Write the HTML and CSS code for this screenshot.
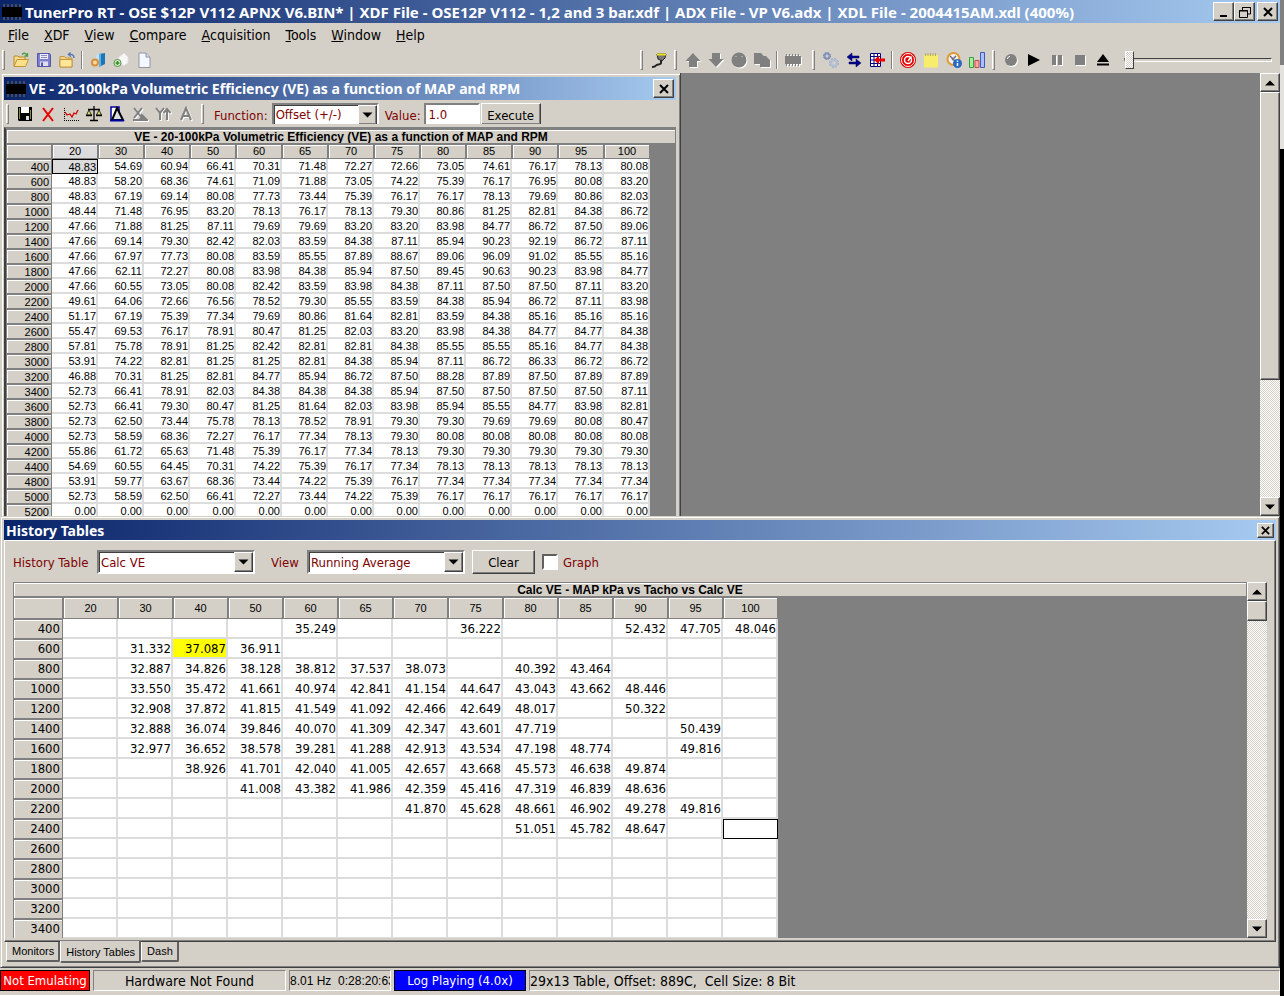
FILE: index.html
```html
<!DOCTYPE html>
<html lang="en">
<head>
  <meta charset="UTF-8">
  <title>TunerPro RT</title>
  <link rel="stylesheet" href="styles.css">
</head>
<body>
  <svg class="sprite" aria-hidden="true">
    <symbol id="chip" viewBox="0 0 20 16">
      <path d="M2 0v16M6 0v16M10 0v16M14 0v16M18 0v16" stroke="#55585f" stroke-width="1.5"/>
      <rect y="3" width="20" height="10" fill="#000"/>
    </symbol>
    <symbol id="x" viewBox="0 0 10 10">
      <path d="M1 1l8 8M9 1l-8 8" stroke="#000" stroke-width="2"/>
    </symbol>
    <symbol id="up" viewBox="0 0 10 6"><path d="M0 5.500L5 .5l5 5z"/></symbol>
    <symbol id="down" viewBox="0 0 10 6"><path d="M0 .5h10l-5 5z"/></symbol>
  </svg>

  <div class="app">
    <header class="titlebar">
      <svg class="chip"><use href="#chip"/></svg>
      <h1>TunerPro RT - OSE $12P V112 APNX V6.BIN* | XDF File - OSE12P V112 - 1,2 and 3 bar.xdf | ADX File - VP V6.adx | XDL File - 2004415AM.xdl (400%)</h1>
      <div class="win-buttons">
        <button class="cap" aria-label="Minimize"><svg viewBox="0 0 12 12"><path d="M2 10h7" stroke="#000" stroke-width="2"/></svg></button>
        <button class="cap" aria-label="Restore"><svg viewBox="0 0 12 12"><path d="M3.500 4V1.500h8V8H9M3 1.500h9M.5 4.500h8v7h-8zM0 5h9" fill="none" stroke="#000"/></svg></button>
        <button class="cap close" aria-label="Close"><svg><use href="#x"/></svg></button>
      </div>
    </header>

    <nav class="menu">
      <a href="#"><u>F</u>ile</a>
      <a href="#"><u>X</u>DF</a>
      <a href="#"><u>V</u>iew</a>
      <a href="#"><u>C</u>ompare</a>
      <a href="#"><u>A</u>cquisition</a>
      <a href="#"><u>T</u>ools</a>
      <a href="#"><u>W</u>indow</a>
      <a href="#"><u>H</u>elp</a>
    </nav>

    <div class="toolbar">
      <div class="group first">
        <button class="tool" aria-label="Open"><svg viewBox="0 0 16 16"><path d="M1 14V4h4l1 1h6v3" fill="#f3dc8c" stroke="#b98a2a"/><path d="M1 14.500l3-7h11.500l-3 7z" fill="#fbe08a" stroke="#c69532"/><path d="M9 2.500c2-2 4-1.500 5 1M14.500 1v3h-3" fill="none" stroke="#4d9a45" stroke-width="1.300"/></svg></button>
        <button class="tool" aria-label="Save"><svg viewBox="0 0 16 16"><path d="M1.500 1.500h12l1 1v12h-13z" fill="#8080d0" stroke="#5555a8"/><path d="M4 2h8v5H4z" fill="#eef"/><path d="M5 3.500h6M5 5.500h6" stroke="#8a8ac8"/><path d="M4 9.500h8V14H4z" fill="#dde"/><path d="M5 10.500h2V14H5z" fill="#55a"/></svg></button>
        <button class="tool" aria-label="Close file"><svg viewBox="0 0 16 16"><path d="M1 6V4.500h4.500L7 6h6v9H1z" fill="#f5d67c" stroke="#c29543"/><path d="M1 7.500h12V15H1z" fill="#ffe698" stroke="#c29543"/><path d="M15 6c0-3-2-4-5-3.500M11.500.5l-2 2 2.300 2" fill="none" stroke="#5a72b5" stroke-width="1.400"/></svg></button>
        <span class="sep"></span>
        <button class="tool" aria-label="Select XDF"><svg viewBox="0 0 16 16"><path d="M6 3l3-1v12H6z" fill="#bfe0f5"/><path d="M9 2l6-1v11l-6 3z" fill="#1976b8"/><path d="M9 2l2-.5V14l-2 1z" fill="#63b2e2"/><circle cx="5" cy="10.500" r="3" fill="#f5d9a5" stroke="#d8913a" stroke-width="2"/></svg></button>
        <button class="tool" aria-label="New item"><svg viewBox="0 0 16 16"><path d="M5 6l6-5 4 4v6l-5 3z" fill="#f7f7f7" stroke="#dedede"/><circle cx="4.500" cy="11" r="3.500" fill="#e4f3dc" stroke="#4e9638"/><path d="M2.500 11h4M4.500 9v4" stroke="#2f8a20" stroke-width="1.500"/></svg></button>
        <button class="tool" aria-label="New file"><svg viewBox="0 0 16 16"><path d="M3 1h7l4 4v10.500H3z" fill="#f5f9ff" stroke="#8d96a8"/><path d="M10 1v4h4" fill="#d3dcec" stroke="#8d96a8"/></svg></button>
      </div>
      <div class="group">
        <button class="tool" aria-label="Connect"><svg viewBox="0 0 16 16"><path d="M6 2h9l-1 4-3 3-4-2z" fill="#777" stroke="#222"/><path d="M6 2.500h9" stroke="#e8e020" stroke-width="2"/><path d="M10 8v3c0 2-4 1-5 2.500S2 15 1 15" fill="none" stroke="#222" stroke-width="2"/></svg></button>
      </div>
      <div class="group wide">
        <button class="tool off" aria-label="Upload" disabled><svg viewBox="0 0 16 16"><path d="M8 1l7.500 8H12v6H4V9H.5z"/></svg></button>
        <button class="tool off" aria-label="Download" disabled><svg viewBox="0 0 16 16"><path d="M8 15l7.500-8H12V1H4v6H.5z"/></svg></button>
        <button class="tool off" aria-label="Verify" disabled><svg viewBox="0 0 16 16"><circle cx="8" cy="8" r="7.500"/><path d="M5 4v1M11 4v1" stroke="#d4d0c8"/></svg></button>
        <button class="tool off" aria-label="Copy" disabled><svg viewBox="0 0 16 16"><path d="M0 1h7l3 3h2l4 4v7H6v-3H0z"/></svg></button>
        <span class="sep"></span>
        <button class="tool off" aria-label="Chip" disabled><svg viewBox="0 0 16 16"><path d="M0 4h16v8H0z"/><path d="M1.500 2v12M4.500 2v12M7.500 2v12M10.500 2v12M13.500 2v12" stroke="#808080"/></svg></button>
      </div>
      <div class="group">
        <button class="tool" aria-label="Settings"><svg viewBox="0 0 16 16"><circle cx="4" cy="4" r="2.500" fill="none" stroke="#8795bd" stroke-width="2"/><circle cx="4" cy="4" r="3.500" fill="none" stroke="#7182b2" stroke-dasharray="1.500 1.250"/><circle cx="11" cy="11" r="3" fill="none" stroke="#b4bfd6" stroke-width="2.500"/><circle cx="11" cy="11" r="4.500" fill="none" stroke="#98a6c5" stroke-dasharray="2 1.500"/></svg></button>
        <button class="tool" aria-label="Exchange"><svg viewBox="0 0 16 16"><path d="M1 5l5-4v3h7v2H6v3zM15 11l-5-4v3H3v2h7v3z" fill="#000090" stroke="#000050" stroke-width=".5"/></svg></button>
        <button class="tool" aria-label="Import"><svg viewBox="0 0 16 16"><path d="M1.500 1.500h10v13h-10zM1.500 4.500h10M1.500 8h10M1.500 11.500h10M5 1.500v13M8.500 1.500v13" fill="#fff" stroke="#000080"/><path d="M5 8l5-4.500v3h6v3h-6v3z" fill="#f00000"/></svg></button>
        <span class="sep"></span>
        <button class="tool" aria-label="Gauge"><svg viewBox="0 0 16 16"><circle cx="8" cy="8" r="8" fill="#e00000"/><circle cx="8" cy="8" r="6.500" fill="none" stroke="#fff"/><circle cx="8" cy="8" r="3.500" fill="#e00000" stroke="#fff" stroke-width="1.500"/><path d="M8 9l3.500-4.500" stroke="#fff" stroke-width="1.500"/></svg></button>
        <button class="tool" aria-label="Notes"><svg viewBox="0 0 16 16"><path d="M1 3h14v12.500H1z" fill="#f8ec6c"/><path d="M2.500 1v3M5 1v3M7.500 1v3M10 1v3M12.500 1v3" stroke="#b0a85a"/></svg></button>
        <button class="tool" aria-label="Dashboard"><svg viewBox="0 0 16 16"><circle cx="7.500" cy="7" r="6" fill="#f4f1e8" stroke="#e09a35" stroke-width="2"/><path d="M4 4l5 5M10 4L6 8" stroke="#677186" stroke-width="1.500"/><circle cx="11.500" cy="11.500" r="4.500" fill="#2868c0"/><path d="M11.500 8.500v1.500M11.500 11v3" stroke="#fff" stroke-width="1.500"/></svg></button>
        <button class="tool" aria-label="Monitors"><svg viewBox="0 0 16 16"><path d="M.5 5.500h4v10h-4z" fill="#a5eda0" stroke="#38a038"/><path d="M6 8.500h4v7H6z" fill="#f7aaa5" stroke="#c94b48"/><path d="M11.500.5h4v15h-4z" fill="#a9c2ff" stroke="#3f5bc0"/></svg></button>
      </div>
      <div class="group">
        <button class="tool off" aria-label="Record" disabled><svg viewBox="0 0 16 16"><circle cx="8" cy="8" r="6"/><path d="M4.500 7c0-1.500 1-2.500 2.500-2.500" fill="none" stroke="#fff"/></svg></button>
        <button class="tool" aria-label="Play"><svg viewBox="0 0 16 16"><path d="M2 2l12 6-12 6z"/></svg></button>
        <button class="tool off" aria-label="Pause" disabled><svg viewBox="0 0 16 16"><path d="M3 3h4v10H3zM9 3h4v10H9z"/></svg></button>
        <button class="tool off" aria-label="Stop" disabled><svg viewBox="0 0 16 16"><path d="M3 3h10v10H3z"/></svg></button>
        <button class="tool" aria-label="Eject"><svg viewBox="0 0 16 16"><path d="M8 2l6 8H2zM2 11.500h12v2H2z"/></svg></button>
      </div>
      <input class="slider" type="range" min="0" max="100" value="0" aria-label="Log position">
    </div>

    <main class="workspace">
      <section class="child">
        <div class="titlebar">
          <svg class="chip"><use href="#chip"/></svg>
          <h2>VE - 20-100kPa Volumetric Efficiency (VE) as a function of MAP and RPM</h2>
          <button class="cap close" aria-label="Close table"><svg><use href="#x"/></svg></button>
        </div>
        <div class="child-bar">
          <div class="group">
            <button class="tool" aria-label="Save table"><svg viewBox="0 0 16 16"><path d="M1 1h14v14H2l-1-1z"/><path d="M4 1h8v6H4z" fill="#fff"/><path d="M2 2h1v11H2zM13 4h1v9h-1z" fill="#8a8a30"/><path d="M9 10h3v4H9z" fill="#ddd"/></svg></button>
            <button class="tool" aria-label="Discard"><svg viewBox="0 0 16 16"><path d="M3 2l10 13M13 2L3 15" stroke="#e80000" stroke-width="2"/></svg></button>
            <button class="tool" aria-label="Graph table"><svg viewBox="0 0 16 16"><path d="M1.500 2v13M1 14.500h15" fill="none" stroke="#000" stroke-dasharray="1 1"/><path d="M2 6l2 3 3-1 2 3 2-4 2 1 2-4" fill="none" stroke="#d00000" stroke-width="1.300"/></svg></button>
            <button class="tool" aria-label="Compare tables"><svg viewBox="0 0 16 16"><path d="M8 0v14M4 14.500h8M2 3.500h12" stroke="#000" stroke-width="1.300"/><path d="M3 4L.5 9h5zM13 4l-2.500 5h5z" fill="#e8e070" stroke="#000" stroke-width=".8"/><path d="M0 9.500h6M10 9.500h6" stroke="#000" stroke-width="1.500"/></svg></button>
            <button class="tool" aria-label="Difference"><svg viewBox="0 0 16 16"><path d="M2 1h8v13H2z" fill="#fff" stroke="#0000a0" stroke-width="1.500"/><path d="M8 2l6 12H3z" fill="#ddd" stroke="#000" stroke-width="2"/><path d="M1 14.500h14" stroke="#0000a0" stroke-width="2"/></svg></button>
            <button class="tool off" aria-label="X axis" disabled><svg viewBox="0 0 16 16"><path d="M2 2l8 10M10 2L2 12M1 14h14M10 9l5 5H8z" fill="#808080" stroke="#808080" stroke-width="2"/></svg></button>
            <button class="tool off" aria-label="Y axis" disabled><svg viewBox="0 0 16 16"><path d="M1 2l4 5 4-5M5 7v7M12 14V3M8.500 7L12 3l3.500 4" fill="none" stroke="#808080" stroke-width="2"/></svg></button>
            <button class="tool off" aria-label="Annotate" disabled><svg viewBox="0 0 16 16"><path d="M3 14L8 2l5 12M5 10h6" fill="none" stroke="#808080" stroke-width="2"/></svg></button>
          </div>
          <div class="group fields">
            <label for="func">Function:</label>
            <span class="combo func"><select id="func"><option>Offset (+/-)</option></select><svg><use href="#down"/></svg></span>
            <label for="val">Value:</label>
            <input id="val" class="value" type="text" value="1.0">
            <button class="execute">Execute</button>
          </div>
        </div>
        <div class="ve-grid">
          <div class="grid-title">VE - 20-100kPa Volumetric Efficiency (VE) as a function of MAP and RPM</div>
          <table id="ve" class="ve"></table>
        </div>
      </section>
      <div class="scroll">
        <button aria-label="Scroll up"><svg><use href="#up"/></svg></button>
        <span class="thumb tall"></span>
        <button class="end" aria-label="Scroll down"><svg><use href="#down"/></svg></button>
      </div>
    </main>

    <section class="dock">
      <div class="titlebar">
        <h2>History Tables</h2>
        <button class="cap close" aria-label="Close history"><svg><use href="#x"/></svg></button>
      </div>
      <div class="pane">
        <div class="controls">
          <label for="hist">History Table</label>
          <span class="combo"><select id="hist"><option>Calc VE</option></select><svg><use href="#down"/></svg></span>
          <label for="view" class="view">View</label>
          <span class="combo"><select id="view"><option>Running Average</option></select><svg><use href="#down"/></svg></span>
          <button class="clear">Clear</button>
          <input id="graph" type="checkbox"><label for="graph">Graph</label>
        </div>
        <div class="history-area">
          <div class="history-grid">
            <div class="grid-title">Calc VE - MAP kPa vs Tacho vs Calc VE</div>
            <table id="history" class="history"></table>
          </div>
          <div class="scroll">
            <button aria-label="Scroll history up"><svg><use href="#up"/></svg></button>
            <span class="thumb"></span>
            <button class="end" aria-label="Scroll history down"><svg><use href="#down"/></svg></button>
          </div>
        </div>
      </div>
      <div class="tabs">
        <button>Monitors</button>
        <button class="active">History Tables</button>
        <button>Dash</button>
      </div>
    </section>

    <footer class="status">
      <span class="emu">Not Emulating</span>
      <span class="hw">Hardware Not Found</span>
      <span class="time">8.01 Hz&nbsp; 0:28:20:63</span>
      <span class="log">Log Playing (4.0x)</span>
      <span class="info">29x13 Table, Offset: 889C,&nbsp; Cell Size: 8 Bit</span>
    </footer>
  </div>

  <script>
    const mapCols = [20, 30, 40, 50, 60, 65, 70, 75, 80, 85, 90, 95, 100];

    // rpm | one value per MAP column
    const veRows = `
400 48.83 54.69 60.94 66.41 70.31 71.48 72.27 72.66 73.05 74.61 76.17 78.13 80.08
600 48.83 58.20 68.36 74.61 71.09 71.88 73.05 74.22 75.39 76.17 76.95 80.08 83.20
800 48.83 67.19 69.14 80.08 77.73 73.44 75.39 76.17 76.17 78.13 79.69 80.86 82.03
1000 48.44 71.48 76.95 83.20 78.13 76.17 78.13 79.30 80.86 81.25 82.81 84.38 86.72
1200 47.66 71.88 81.25 87.11 79.69 79.69 83.20 83.20 83.98 84.77 86.72 87.50 89.06
1400 47.66 69.14 79.30 82.42 82.03 83.59 84.38 87.11 85.94 90.23 92.19 86.72 87.11
1600 47.66 67.97 77.73 80.08 83.59 85.55 87.89 88.67 89.06 96.09 91.02 85.55 85.16
1800 47.66 62.11 72.27 80.08 83.98 84.38 85.94 87.50 89.45 90.63 90.23 83.98 84.77
2000 47.66 60.55 73.05 80.08 82.42 83.59 83.98 84.38 87.11 87.50 87.50 87.11 83.20
2200 49.61 64.06 72.66 76.56 78.52 79.30 85.55 83.59 84.38 85.94 86.72 87.11 83.98
2400 51.17 67.19 75.39 77.34 79.69 80.86 81.64 82.81 83.59 84.38 85.16 85.16 85.16
2600 55.47 69.53 76.17 78.91 80.47 81.25 82.03 83.20 83.98 84.38 84.77 84.77 84.38
2800 57.81 75.78 78.91 81.25 82.42 82.81 82.81 84.38 85.55 85.55 85.16 84.77 84.38
3000 53.91 74.22 82.81 81.25 81.25 82.81 84.38 85.94 87.11 86.72 86.33 86.72 86.72
3200 46.88 70.31 81.25 82.81 84.77 85.94 86.72 87.50 88.28 87.89 87.50 87.89 87.89
3400 52.73 66.41 78.91 82.03 84.38 84.38 84.38 85.94 87.50 87.50 87.50 87.50 87.11
3600 52.73 66.41 79.30 80.47 81.25 81.64 82.03 83.98 85.94 85.55 84.77 83.98 82.81
3800 52.73 62.50 73.44 75.78 78.13 78.52 78.91 79.30 79.30 79.69 79.69 80.08 80.47
4000 52.73 58.59 68.36 72.27 76.17 77.34 78.13 79.30 80.08 80.08 80.08 80.08 80.08
4200 55.86 61.72 65.63 71.48 75.39 76.17 77.34 78.13 79.30 79.30 79.30 79.30 79.30
4400 54.69 60.55 64.45 70.31 74.22 75.39 76.17 77.34 78.13 78.13 78.13 78.13 78.13
4800 53.91 59.77 63.67 68.36 73.44 74.22 75.39 76.17 77.34 77.34 77.34 77.34 77.34
5000 52.73 58.59 62.50 66.41 72.27 73.44 74.22 75.39 76.17 76.17 76.17 76.17 76.17
5200 0.00 0.00 0.00 0.00 0.00 0.00 0.00 0.00 0.00 0.00 0.00 0.00 0.00`;

    // "-" is a cell with no samples
    const historyRows = `
400 - - - - 35.249 - - 36.222 - - 52.432 47.705 48.046
600 - 31.332 37.087 36.911 - - - - - - - - -
800 - 32.887 34.826 38.128 38.812 37.537 38.073 - 40.392 43.464 - - -
1000 - 33.550 35.472 41.661 40.974 42.841 41.154 44.647 43.043 43.662 48.446 - -
1200 - 32.908 37.872 41.815 41.549 41.092 42.466 42.649 48.017 - 50.322 - -
1400 - 32.888 36.074 39.846 40.070 41.309 42.347 43.601 47.719 - - 50.439 -
1600 - 32.977 36.652 38.578 39.281 41.288 42.913 43.534 47.198 48.774 - 49.816 -
1800 - - 38.926 41.701 42.040 41.005 42.657 43.668 45.573 46.638 49.874 - -
2000 - - - 41.008 43.382 41.986 42.359 45.416 47.319 46.839 48.636 - -
2200 - - - - - - 41.870 45.628 48.661 46.902 49.278 49.816 -
2400 - - - - - - - - 51.051 45.782 48.647 - -
2600 - - - - - - - - - - - - -
2800 - - - - - - - - - - - - -
3000 - - - - - - - - - - - - -
3200 - - - - - - - - - - - - -
3400 - - - - - - - - - - - - -`;

    function fillTable(id, text, marks) {
      let html = "<thead><tr><th></th>" + mapCols.map((c, i) =>
        `<th scope="col" class="${marks["col" + i] || ""}">${c}</th>`).join("") + "</tr></thead><tbody>";
      text.trim().split("\n").forEach(line => {
        const [rpm, ...cells] = line.split(" ");
        html += `<tr><th scope="row">${rpm}</th>`;
        cells.forEach((v, i) => {
          html += `<td class="${marks[rpm + "/" + mapCols[i]] || ""}">${v === "-" ? "" : v}</td>`;
        });
        html += "</tr>";
      });
      document.getElementById(id).innerHTML = html + "</tbody>";
    }

    fillTable("ve", veRows, { "400/20": "selected", col0: "current" });
    fillTable("history", historyRows, { "600/40": "hit", "2400/100": "cursor" });
  </script>
</body>
</html>
```
FILE: styles.css
```css
*, *::before {
  box-sizing: border-box;
}
body {
  margin: 0;
  font-family: "DejaVu Sans Condensed", "DejaVu Sans", sans-serif;
  font-size: 13px;
  color: #000;
  /* strip of desktop beside the window */
  background: linear-gradient(#808080 65px, #e4e2de 65px, #e4e2de 149px, #000 149px);
}
button, input, select {
  font: inherit;
  margin: 0;
  padding: 0;
  border-radius: 0;
}
.sprite {
  display: none;
}
.app {
  display: flex;
  flex-direction: column;
  height: 100vh;
  margin-right: 4px;
  background: #d4d0c8;
}

/* title bars */
.titlebar {
  display: flex;
  align-items: center;
  flex: none;
  height: 23px;
  padding-right: 2px;
  background: linear-gradient(90deg, #0a246a, #a6caf0);
  color: #fff;
}
.titlebar h1, .titlebar h2 {
  flex: 1;
  margin: 0;
  font: bold 15px/20px "Noto Sans", sans-serif;
  white-space: nowrap;
  overflow: hidden;
}
.chip {
  flex: none;
  width: 20px;
  height: 16px;
  margin: 0 3px 0 2px;
}
.win-buttons {
  display: flex;
}
.cap, .clear, .scroll button, .thumb, .execute {
  background: #d4d0c8;
  border: 1px solid;
  border-color: #fff #404040 #404040 #fff;
  box-shadow: inset -1px -1px #808080;
}
.cap {
  display: flex;
  align-items: center;
  justify-content: center;
  width: 21px;
  height: 19px;
}
.cap svg {
  width: 12px;
  height: 12px;
}
.cap.close svg {
  width: 10px;
  height: 10px;
}
.win-buttons .close {
  margin-left: 2px;
}

/* menu and toolbars */
.menu {
  display: flex;
  gap: 15px;
  flex: none;
  height: 24px;
  padding-left: 8px;
  font-size: 14px;
  line-height: 24px;
}
.menu a {
  color: #000;
  text-decoration: none;
}
.toolbar {
  display: flex;
  align-items: center;
  gap: 4px;
  flex: none;
  height: 26px;
}
.group {
  display: flex;
  align-items: center;
}
.group::before {
  content: "";
  width: 3px;
  height: 20px;
  margin-right: 4px;
  border: 1px solid;
  border-color: #fff #808080 #808080 #fff;
}
.group.first {
  flex: 0 0 50%;
  margin-right: -4px;
  padding-left: 2px;
}
.group.wide {
  padding-right: 4px;
}
.tool {
  display: flex;
  align-items: center;
  justify-content: center;
  width: 23px;
  height: 22px;
  border: 0;
  background: none;
}
.tool svg {
  width: 16px;
  height: 16px;
}
.tool.off svg {
  fill: #808080;
  filter: drop-shadow(1px 1px 0 #fff);
}
.sep {
  width: 2px;
  height: 18px;
  margin: 0 3px;
  border-left: 1px solid #808080;
  border-right: 1px solid #fff;
}
.slider {
  flex: 1;
  min-width: 0;
  height: 20px;
  margin: 0 8px 0 6px;
  appearance: none;
  background: none;
}
.slider::-webkit-slider-runnable-track {
  height: 4px;
  background: #d4d0c8;
  border: 1px solid;
  border-color: #404040 #fff #fff #808080;
}
.slider::-webkit-slider-thumb {
  appearance: none;
  width: 9px;
  height: 18px;
  margin-top: -8px;
  background: repeating-conic-gradient(#d4d0c8 0 25%, #fff 0 50%) 0 0 / 2px 2px;
  border: 1px solid;
  border-color: #fff #404040 #404040 #fff;
}

/* MDI area */
.workspace {
  display: flex;
  justify-content: space-between;
  flex: 1;
  min-height: 0;
  overflow: hidden;
  background: #808080;
}
.child {
  width: 681px;
  padding: 4px 4px 0 4px;
  background: #d4d0c8;
  border-right: 1px solid #404040;
  box-shadow: inset 2px 1px #d4d0c8, inset 3px 2px #fff, inset -1px 0 #808080;
}
.titlebar h2 {
  font-size: 14px;
}
.child-bar {
  display: flex;
  gap: 4px;
  height: 27px;
  padding-left: 2px;
}
.child-bar .tool {
  height: 27px;
}
.fields {
  color: #800000;
}
.fields::before {
  margin-right: 10px;
}
.child-bar label {
  padding-top: 3px;
}
.combo {
  position: relative;
  display: flex;
  width: 158px;
  height: 24px;
  background: #fff;
  border: 2px solid;
  border-color: #808080 #fff #fff #808080;
  box-shadow: inset 1px 1px #404040;
}
.combo select {
  flex: 1;
  width: 100%;
  padding: 0 20px 0 2px;
  border: 0;
  background: none;
  color: #800000;
  appearance: none;
}
.combo svg {
  position: absolute;
  top: 0;
  right: 0;
  width: 19px;
  height: 20px;
  padding: 6px 3px;
  background: #d4d0c8;
  border: 1px solid;
  border-color: #fff #404040 #404040 #fff;
  box-shadow: inset -1px -1px #808080;
  pointer-events: none;
}
.combo.func {
  width: 107px;
  height: 21px;
  margin: 0 6px 0 4px;
  border-bottom: 0;
}
.combo.func svg {
  height: 19px;
  border-bottom: 0;
}
.value {
  width: 56px;
  height: 21px;
  margin: 0 1px 0 3px;
  padding-left: 3px;
  border: 2px solid;
  border-color: #808080 #fff #fff #808080;
  border-bottom: 0;
  color: #800000;
}
.execute {
  width: 60px;
  height: 21px;
  border-bottom: 0;
  padding-top: 2px;
}

/* grids */
.grid-title {
  flex: none;
  height: 15px;
  border: 1px solid #808080;
  box-shadow: inset 1px 1px #fff;
  background: #d4d0c8;
  font: bold 12px/15px "Liberation Sans", Arial, sans-serif;
  text-align: center;
  white-space: nowrap;
  overflow: hidden;
}
table {
  border-collapse: separate;
  border-spacing: 0;
  table-layout: fixed;
}
th, td {
  padding: 0 2px;
  white-space: nowrap;
  overflow: hidden;
}
th {
  background: #d4d0c8;
  border: 1px solid #808080;
  box-shadow: inset 1px 1px #fff;
  font: 11px/12px "Liberation Sans", Arial, sans-serif;
}
td, tbody th {
  text-align: right;
}
td {
  background: #fff;
  border-right: 2px solid #dcdcdc;
  border-bottom: 2px solid #dcdcdc;
}
.ve-grid {
  height: 400px;
  background: #808080;
  border: 2px solid #404040;
  border-width: 2px 0 0 2px;
  border-top-color: #808080;
}
.ve {
  width: 644px;
}
.ve tr {
  height: 15px;
}
.ve th:first-child {
  width: 46px;
}
.ve td {
  padding-right: 0;
  font: 11px/12px "Liberation Sans", Arial, sans-serif;
}
.ve thead th {
  line-height: 13px;
}
.ve th.current {
  background: #dcdcdc;
}
.ve td.selected {
  padding-right: 1px;
  background: #dcdcdc;
  border: 1px solid #000;
}
.history {
  width: 765px;
}
.history tr {
  height: 20px;
}
.history thead tr {
  height: 22px;
}
.history th:first-child {
  width: 50px;
}
.history td, .history tbody th {
  font: 13px/18px "DejaVu Sans Condensed", "DejaVu Sans", sans-serif;
}
.history td {
  padding: 2px 0 0;
  line-height: 16px;
}
.history td.hit {
  background: #ff0;
}
.history td.cursor {
  border: 1px solid #000;
}

/* scroll bars */
.scroll {
  display: flex;
  flex-direction: column;
  flex: none;
  width: 20px;
  background: repeating-conic-gradient(#d4d0c8 0 25%, #fff 0 50%) 0 0 / 2px 2px;
}
.scroll button {
  display: flex;
  align-items: center;
  justify-content: center;
  width: 20px;
  height: 19px;
}
.scroll button svg {
  width: 10px;
  height: 6px;
}
.scroll .end {
  margin-top: auto;
}
.thumb {
  height: 20px;
}
.thumb.tall {
  height: 65%;
}

/* history dock */
.dock {
  flex: none;
  padding: 3px;
  border: 1px solid;
  border-color: #d4d0c8 #404040 #404040 #d4d0c8;
  box-shadow: inset 1px 1px #fff, inset -1px -1px #808080;
}
.dock .titlebar {
  height: 20px;
}
.dock h2 {
  padding: 2px 0 0 2px;
}
.dock .cap {
  width: 17px;
  height: 15px;
}
.dock .cap svg {
  width: 9px;
  height: 9px;
}
.pane {
  padding: 9px 8px 3px 8px;
  border: 1px solid;
  border-color: #fff #404040 #404040 #fff;
  box-shadow: inset -1px -1px #808080;
}
.controls {
  display: flex;
  align-items: center;
  height: 24px;
  color: #800000;
}
.controls label {
  width: 84px;
}
.controls .view {
  width: 36px;
  margin-left: 16px;
}
.clear {
  width: 63px;
  height: 24px;
  margin: 0 7px;
}
.controls input[type="checkbox"] {
  width: 16px;
  height: 16px;
  margin-right: 5px;
  appearance: none;
  background: #fff;
  border: 2px solid;
  border-color: #606060 #fff #fff #606060;
}
.history-area {
  display: flex;
  height: 356px;
  margin-top: 8px;
}
.history-grid {
  flex: 1;
  min-width: 0;
  overflow: hidden;
  background: #808080;
}
.tabs {
  display: flex;
  align-items: flex-start;
  height: 22px;
  padding-left: 2px;
  font: 11px/18px "Liberation Sans", Arial, sans-serif;
}
.tabs button {
  height: 20px;
  padding: 0 4px 0 5px;
  background: #d4d0c8;
  border: solid;
  border-width: 0 2px 2px 1px;
  border-color: #404040 #606060 #606060 #fff;
  border-radius: 0 0 2px 2px;
}
.tabs .active {
  height: 22px;
  margin-top: -1px;
  padding-top: 2px;
}

/* status bar */
.status {
  display: flex;
  gap: 3px;
  flex: none;
  height: 28px;
  padding: 2px 0 4px 0;
  border-bottom: 1px solid #fff;
  font-size: 14px;
  line-height: 20px;
  white-space: nowrap;
}
.status > span {
  border: 1px solid;
  border-color: #808080 #fff #fff #808080;
  text-align: center;
  overflow: hidden;
}
.status .emu {
  width: 90px;
  background: #f00;
  border-color: #000;
  color: #fff;
  font-size: 13px;
}
.status .hw {
  width: 193px;
}
.status .time {
  width: 102px;
  font-family: "Liberation Sans", Arial, sans-serif;
  font-size: 12px;
}
.status .log {
  width: 132px;
  background: #00f;
  border-color: #000;
  color: #fff;
  font-size: 13px;
}
.status .info {
  flex: 1;
  text-align: left;
}
```
